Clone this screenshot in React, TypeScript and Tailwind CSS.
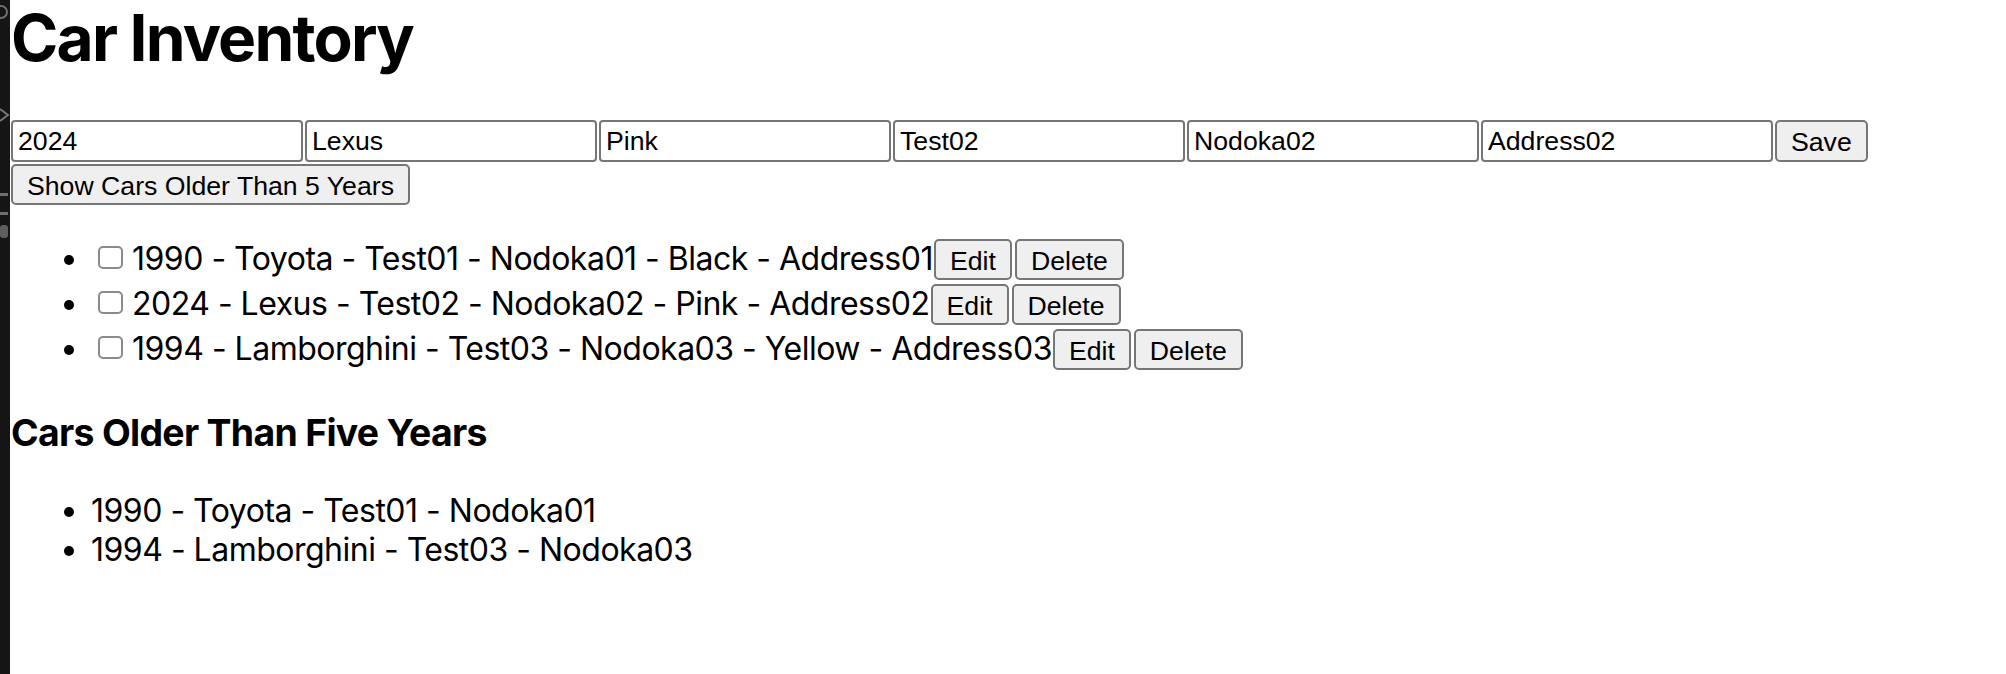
import React from 'react'

const cars = [
  { id: 1, year: 1990, make: 'Toyota', model: 'Test01', owner: 'Nodoka01', color: 'Black', address: 'Address01' },
  { id: 2, year: 2024, make: 'Lexus', model: 'Test02', owner: 'Nodoka02', color: 'Pink', address: 'Address02' },
  { id: 3, year: 1994, make: 'Lamborghini', model: 'Test03', owner: 'Nodoka03', color: 'Yellow', address: 'Address03' },
]

const form = ['2024', 'Lexus', 'Pink', 'Test02', 'Nodoka02', 'Address02']

const btn =
  "inline-block h-[41px] px-[14px] py-0 align-baseline border-2 border-[#767676] rounded-[5px] bg-[#efefef] text-black font-['Liberation_Sans',Arial,sans-serif] text-[26.67px] leading-normal tracking-normal"

export default function App() {
  const older = cars.filter(c => 2024 - c.year > 5)

  return (
    <div className="flex min-h-screen bg-white">
      {/* editor gutter */}
      <div className="w-[10px] shrink-0 bg-[#151515] flex flex-col items-start overflow-hidden">
        <div className="w-[14px] h-[14px] mt-[5px] -ml-[6px] rounded-full border-2 border-[#6e6e6e]" />
        <svg className="mt-[88px]" width="10" height="16" viewBox="0 0 10 16">
          <path d="M0 2 L8 8 L0 14" fill="none" stroke="#777" strokeWidth="2" />
        </svg>
        <div className="mt-[70px] w-[8px] h-[3px] bg-[#6e6e6e]" />
        <div className="mt-[16px] w-[8px] h-[3px] bg-[#6e6e6e]" />
        <div className="mt-[10px] w-[8px] h-[13px] rounded-[3px] bg-[#5e5e5e]" />
      </div>

      <div className="pl-[1px] text-black font-['Inter',sans-serif]">
        <h1 className="mt-[6px] mb-[50px] text-[64px] leading-[64px] font-bold tracking-[-1.8px]">Car Inventory</h1>

        <div className="flex items-center gap-[2px]">
          {form.map(v => (
            <input
              key={v}
              defaultValue={v}
              className="w-[292px] h-[42px] px-[5px] border-2 border-[#767676] rounded-[4px] bg-white text-black font-['Liberation_Sans',Arial,sans-serif] text-[26.67px] outline-none"
            />
          ))}
          <button className={btn + ' h-[42px]'}>Save</button>
        </div>

        <button className={btn + ' mt-[2px]'}>Show Cars Older Than 5 Years</button>

        <ul className="mt-[31px] pl-[80px] list-disc text-[32px] tracking-[-0.5px]">
          {cars.map(c => (
            <li key={c.id} className="h-[45px] leading-[45px] whitespace-nowrap">
              <span
                role="checkbox"
                aria-checked="false"
                className="inline-block w-[25px] h-[23px] ml-[7px] mr-[9px] mb-[1px] align-baseline border-2 border-[#8a8a8a] rounded-[5px] bg-white"
              />
              {c.year} - {c.make} - {c.model} - {c.owner} - {c.color} - {c.address}
              <button className={btn + ' ml-[1px]'}>Edit</button>
              <button className={btn + ' ml-[3px]'}>Delete</button>
            </li>
          ))}
        </ul>

        <h3 className="mt-[39px] mb-[37px] text-[37.4px] leading-[45px] font-bold tracking-[-0.7px]">Cars Older Than Five Years</h3>

        <ul className="pl-[80px] list-disc text-[32px] leading-[38.5px] tracking-[-0.5px]">
          {older.map(c => (
            <li key={c.id}>
              {c.year} - {c.make} - {c.model} - {c.owner}
            </li>
          ))}
        </ul>
      </div>
    </div>
  )
}
